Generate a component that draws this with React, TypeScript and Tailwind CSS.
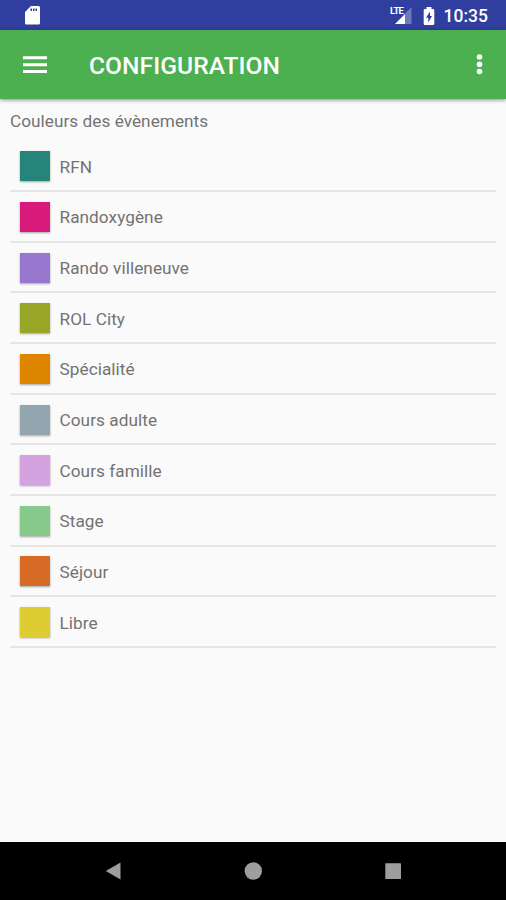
const events = [
  { name: "RFN", color: "bg-[#26857b]" },
  { name: "Randoxygène", color: "bg-[#d81b7a]" },
  { name: "Rando villeneuve", color: "bg-[#9877cf]" },
  { name: "ROL City", color: "bg-[#98a628]" },
  { name: "Spécialité", color: "bg-[#de8500]" },
  { name: "Cours adulte", color: "bg-[#93a6b0]" },
  { name: "Cours famille", color: "bg-[#d4a2de]" },
  { name: "Stage", color: "bg-[#86c98a]" },
  { name: "Séjour", color: "bg-[#d86c27]" },
  { name: "Libre", color: "bg-[#decc33]" },
];

function StatusBar() {
  return (
    <div className="flex h-[30px] shrink-0 items-center bg-[#303f9f] pl-[25px] pr-[18px] text-white">
      <svg width="16" height="20" viewBox="0 0 16 20" fill="currentColor">
        <path fillRule="evenodd" d="M6 1h7.500A1.500 1.500 0 0 1 15 2.500v15.500a1.500 1.500 0 0 1-1.500 1.500h-12A1.500 1.500 0 0 1 0 18V7zM5.500 3.500v2.500h1.500V3.500zM8 3.500v2.500h1.500V3.500zM10.500 3.500v2.500H12V3.500z" />
      </svg>
      <div className="ml-auto flex items-center">
        <div className="relative h-[20px] w-[23px]">
          <svg className="absolute left-[4px] top-[2px]" width="17" height="17" viewBox="0 0 17 17" fill="currentColor">
            <path d="M16.500 0v17H10V6.500z" opacity=".3" />
            <path d="M10 7v10H0z" />
          </svg>
          <span className="absolute left-[-0.500px] top-[2px] text-[9.500px] font-bold leading-[8px] tracking-[-0.800px]">LTE</span>
        </div>
        <svg className="ml-[9px] mt-px" width="12" height="20" viewBox="0 0 12 20" fill="currentColor">
          <path fillRule="evenodd" d="M3.500 1h5v2H10a1.300 1.300 0 0 1 1.300 1.300v13.400A1.300 1.300 0 0 1 10 19H2a1.300 1.300 0 0 1-1.300-1.300V4.300A1.300 1.300 0 0 1 2 3h1.500zM7 5.500L3 11.800h2.300v4.700L9 10H7z" />
        </svg>
        <span className="ml-[9px] mt-[2px] text-[17.500px] font-medium leading-5">10:35</span>
      </div>
    </div>
  );
}

function Toolbar() {
  return (
    <header className="z-10 flex h-[69px] shrink-0 items-center bg-[#4caf50] pl-[23px] pr-[22px] text-white shadow-[0_1px_4px_rgba(0,0,0,0.45)]">
      <svg width="24" height="18" viewBox="0 0 24 18" fill="currentColor">
        <path d="M0 .3h24v3H0zM0 7.300h24v3H0zM0 14h24v3H0z" />
      </svg>
      <h1 className="ml-[42px] mt-[3px] text-[24.600px] font-medium leading-8 tracking-[0.050px]">CONFIGURATION</h1>
      <svg className="-mt-px ml-auto" width="9" height="22" viewBox="0 0 9 22" fill="currentColor">
        <circle cx="4.500" cy="4" r="2.800" />
        <circle cx="4.500" cy="11.200" r="2.800" />
        <circle cx="4.500" cy="18.500" r="2.800" />
      </svg>
    </header>
  );
}

function NavigationBar() {
  return (
    <nav className="flex h-[58px] shrink-0 items-center justify-between bg-black pl-[105px] pr-[104px] text-[#9e9e9e]">
      <svg width="17" height="18" viewBox="0 0 17 18" fill="currentColor">
        <path d="M.8 9L15.500.600v16.800z" />
      </svg>
      <svg width="18" height="18" viewBox="0 0 18 18" fill="currentColor">
        <circle cx="9.300" cy="9" r="8.700" />
      </svg>
      <svg width="18" height="18" viewBox="0 0 18 18" fill="currentColor">
        <rect x="1.300" y="1.300" width="15.700" height="15.700" rx=".5" />
      </svg>
    </nav>
  );
}

export default function App() {
  return (
    <div className="flex h-[900px] w-[506px] flex-col overflow-hidden bg-[#fafafa] font-[Roboto,sans-serif]">
      <StatusBar />
      <Toolbar />
      <main className="flex-1 px-[10px] pt-[12px] text-[17.200px] text-[#737373]">
        <h2 className="leading-5 tracking-[0.040px]">Couleurs des évènements</h2>
        <ul className="mt-[10.400px]">
          {events.map((event) => (
            <li key={event.name} className="flex h-[50.670px] items-center border-b-2 border-[#e5e5e5] pl-[10px]">
              <span className={`mt-px size-[30px] shadow-[0_1px_2px_rgba(0,0,0,0.35)] ${event.color}`} />
              <span className="ml-[9.500px] mt-[2px] leading-5 tracking-[0.060px]">{event.name}</span>
            </li>
          ))}
        </ul>
      </main>
      <NavigationBar />
    </div>
  );
}
